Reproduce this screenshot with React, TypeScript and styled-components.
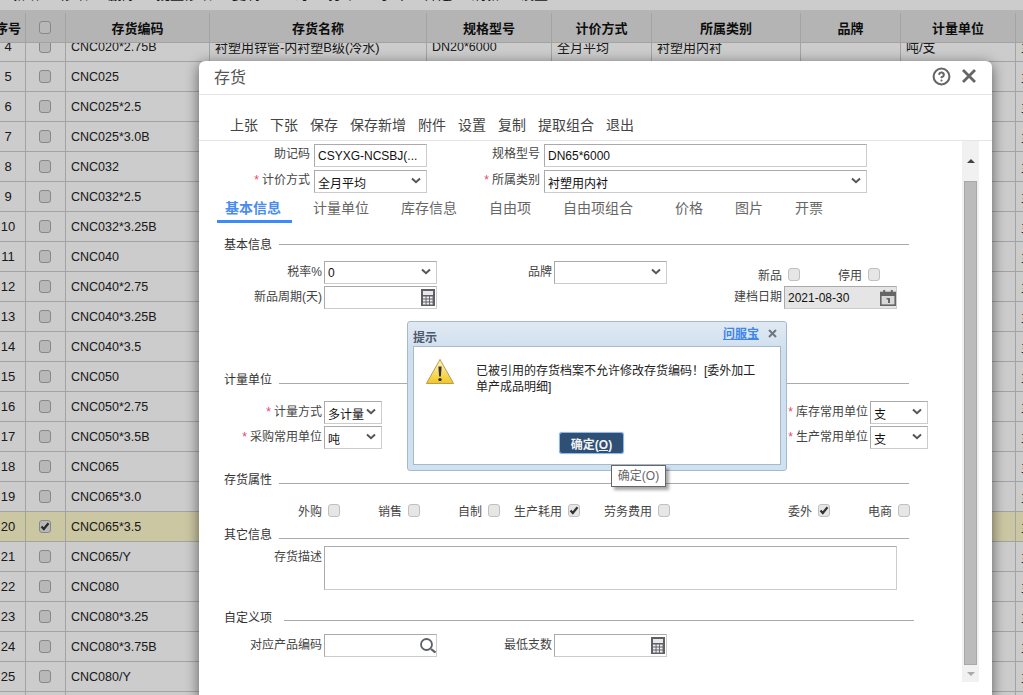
import React from "react";
import styled, { createGlobalStyle } from "styled-components";
import { CircleHelp } from "lucide-react";

const GlobalStyle = createGlobalStyle`
  html, body {
    margin: 0;
    height: 100%;
    overflow: hidden;
    background: #fff;
    font-family: "Liberation Sans", "Noto Sans CJK SC", sans-serif;
    font-size: 12px;
    color: #222;
  }
  * {
    box-sizing: border-box;
  }
`;

const Page = styled.div`
  position: relative;
  width: 1023px;
  height: 695px;
  overflow: hidden;
`;

const TopBar = styled.div`
  height: 10px;
  overflow: hidden;
  display: flex;
  gap: 20px;
  padding-left: 12px;
  span {
    margin-top: -13px;
    font-size: 14px;
    line-height: 14px;
    white-space: nowrap;
  }
`;

const TopRule = styled.div`
  height: 3px;
  background: #e2e2e2;
`;

const Table = styled.div`
  margin-left: -9px;
  width: 1140px;
`;

const HeadRow = styled.div`
  position: relative;
  z-index: 1;
  display: flex;
  height: 30px;
  background: #e2e2e2;
  border-bottom: 1px solid #ccc;
`;

const HeadCell = styled.div<{ $w: number; $check?: boolean }>`
  flex: none;
  width: ${(p) => p.$w}px;
  display: flex;
  align-items: center;
  justify-content: center;
  padding-right: ${(p) => (p.$check ? "1px" : "0")};
  border-right: 1px solid #ccc;
  font-size: 13px;
  font-weight: bold;
  color: #111;
`;

const Rows = styled.div`
  height: 652px;
  overflow: hidden;
`;

const Row = styled.div<{ $active?: boolean; $first?: boolean }>`
  display: flex;
  height: 30px;
  margin-top: ${(p) => (p.$first ? "-11px" : "0")};
  background: ${(p) => (p.$active ? "#fff9cc" : "#fff")};
  border-bottom: 1px solid #ccc;
`;

const Cell = styled.div<{ $w: number; $center?: boolean; $small?: boolean }>`
  flex: none;
  width: ${(p) => p.$w}px;
  display: flex;
  align-items: center;
  justify-content: ${(p) => (p.$center ? "center" : "flex-start")};
  padding-left: ${(p) => (p.$center ? "0" : "5px")};
  border-right: 1px solid #ccc;
  font-size: ${(p) => (p.$small ? "12.5px" : "13px")};
  white-space: nowrap;
  overflow: hidden;
`;

const CheckCell = styled(Cell)`
  padding-right: 1px;
`;

const Overlay = styled.div`
  position: absolute;
  inset: 0;
  z-index: 2;
  background: rgba(0, 0, 0, 0.2);
`;

const Dialog = styled.div`
  position: absolute;
  left: 199px;
  top: 61px;
  width: 793px;
  height: 640px;
  background: #fff;
  border-radius: 6px;
  box-shadow: 0 3px 14px rgba(0, 0, 0, 0.55);
`;

const DialogHead = styled.div`
  display: flex;
  align-items: center;
  justify-content: space-between;
  height: 34px;
  padding: 0 15px 3px;
  border-bottom: 1px solid #e5e5e5;
`;

const DialogTitle = styled.div`
  font-size: 16px;
  color: #555;
`;

const HeadIcons = styled.div`
  display: flex;
  align-items: center;
  gap: 10px;
  color: #666;
`;

const Toolbar = styled.div`
  display: flex;
  gap: 12px;
  height: 46px;
  padding: 20px 0 0 31px;
  border-bottom: 1px solid #e5e5e5;
  font-size: 14px;
  line-height: 20px;
  color: #444;
`;

const Body = styled.div`
  display: flex;
`;

const Form = styled.div`
  flex: none;
  width: 763px;
  padding: 3px 0 0 15px;
`;

const FieldRow = styled.div<{ $top?: number }>`
  display: flex;
  align-items: flex-start;
  min-height: 23px;
  margin-top: ${(p) => p.$top ?? 0}px;
`;

const Label = styled.div<{ $w: number }>`
  flex: none;
  width: ${(p) => p.$w}px;
  height: 23px;
  padding-right: 2px;
  text-align: right;
  line-height: 23px;
  color: #444;
  white-space: nowrap;
`;

const HeadLabel = styled(Label)`
  padding-right: 4px;
  line-height: 20px;
`;

const Star = styled.span`
  margin-right: 3px;
  color: #f0406a;
`;

const Input = styled.div<{ $w: number; $disabled?: boolean }>`
  position: relative;
  flex: none;
  display: flex;
  align-items: center;
  justify-content: space-between;
  width: ${(p) => p.$w}px;
  height: 23px;
  padding: 0 1px 0 3px;
  border: 1px solid #ccc;
  border-top-color: #aaa;
  border-left-color: #aaa;
  background: ${(p) => (p.$disabled ? "#e5e5e5" : "#fff")};
  color: #111;
  white-space: nowrap;
`;

const SelectBox = styled(Input)`
  padding: 1px 5px 0 3px;
`;

const TextArea = styled(Input)`
  height: 44px;
`;

const EdgeIcon = styled.svg`
  margin-right: -1px;
`;

const Chevron = () => (
  <svg width="10" height="7" viewBox="0 0 10 7" style={{ marginTop: -3 }}>
    <path d="M1 1.5 5 5.2 9 1.5" fill="none" stroke="#555" strokeWidth="2" />
  </svg>
);

const CalcIcon = () => (
  <svg width="14" height="17" viewBox="0 0 14 17">
    <rect width="14" height="17" fill="#5f5f66" />
    <rect x="2" y="2" width="10" height="4" fill="#e8e8e8" />
    {[2, 5.5, 9].map((x) =>
      [8, 11, 14].map((y) => (
        <rect key={`${x}-${y}`} x={x} y={y - 0.5} width="2.6" height="2" fill="#eee" />
      ))
    )}
  </svg>
);

const CalendarIcon = () => (
  <EdgeIcon width="16" height="16" viewBox="0 0 16 16">
    <rect x="0.8" y="2.5" width="14.4" height="12.7" fill="#d8d8d8" stroke="#666" strokeWidth="1.6" />
    <rect x="0.8" y="2.5" width="14.4" height="3.5" fill="#666" />
    <rect x="3.2" y="0" width="2" height="4" fill="#666" />
    <rect x="10.8" y="0" width="2" height="4" fill="#666" />
    <rect x="8" y="8" width="2" height="5" fill="#666" />
    <rect x="6.5" y="8" width="2" height="1.5" fill="#666" />
  </EdgeIcon>
);

const SearchIcon = () => (
  <EdgeIcon width="16" height="15" viewBox="0 0 16 15">
    <circle cx="6.5" cy="6.5" r="5.5" fill="none" stroke="#5c6068" strokeWidth="1.8" />
    <path d="M11 11 15.5 14.6" stroke="#5c6068" strokeWidth="2.2" />
  </EdgeIcon>
);

const Tabs = styled.div`
  display: flex;
  height: 27px;
  margin: 3px 0 0 3px;
`;

const Tab = styled.div<{ $w: number }>`
  flex: none;
  width: ${(p) => p.$w}px;
`;

const TabLabel = styled.div<{ $active?: boolean }>`
  width: ${(p) => (p.$active ? "75px" : "auto")};
  height: 27px;
  padding-left: 8px;
  border-bottom: 3px solid ${(p) => (p.$active ? "#3b8bff" : "transparent")};
  font-size: 14px;
  line-height: 24px;
  font-weight: ${(p) => (p.$active ? "bold" : "normal")};
  color: ${(p) => (p.$active ? "#4a8cf0" : "#666")};
`;

const Section = styled.div<{ $top: number; $gap?: number; $w?: number }>`
  display: flex;
  height: 16px;
  width: ${(p) => p.$w ?? 695}px;
  margin-top: ${(p) => p.$top}px;
  padding-left: 10px;
  gap: ${(p) => p.$gap ?? 7}px;
  line-height: 18px;
  color: #333;
`;

const SectionLine = styled.div<{ $y: number }>`
  flex: 1;
  height: 1px;
  margin-top: ${(p) => p.$y}px;
  background: #aaa;
`;

const CheckField = styled.div<{ $w: number; $drop?: boolean }>`
  flex: none;
  display: flex;
  align-items: center;
  justify-content: flex-end;
  gap: 6px;
  width: ${(p) => p.$w}px;
  height: 23px;
  padding-top: ${(p) => (p.$drop ? "4px" : "0")};
  color: #444;
`;

const Box = styled.span<{ $muted?: boolean }>`
  flex: none;
  display: flex;
  align-items: center;
  justify-content: center;
  width: 12px;
  height: 13px;
  border: 1px solid ${(p) => (p.$muted ? "#aaa" : "#c0c0c0")};
  border-radius: 3px;
  background: #e6e6e6;
`;

const Check = ({ on, muted }: { on?: boolean; muted?: boolean }) => (
  <Box $muted={muted}>
    {on && (
      <svg width="10" height="9" viewBox="0 0 10 9">
        <path d="M1.5 4.6 3.8 7 8.5 1.2" fill="none" stroke="#333" strokeWidth="2.2" />
      </svg>
    )}
  </Box>
);

const ScrollBar = styled.div`
  flex: none;
  display: flex;
  flex-direction: column;
  align-items: center;
  width: 17px;
  height: 541px;
  background: #f1f1f1;
`;

const ArrowZone = styled.div<{ $h: number }>`
  flex: none;
  display: flex;
  align-items: center;
  justify-content: center;
  height: ${(p) => p.$h}px;
`;

const Arrow = styled.span<{ $down?: boolean }>`
  width: 0;
  height: 0;
  border-left: 4px solid transparent;
  border-right: 4px solid transparent;
  border-bottom: ${(p) => (p.$down ? "0" : "4px solid #444")};
  border-top: ${(p) => (p.$down ? "4px solid #aaa" : "0")};
`;

const Thumb = styled.div`
  flex: 1;
  width: 13px;
  background: #bbb;
  border: 1px solid #a8a8a8;
`;

const Alert = styled.div`
  position: absolute;
  left: 407px;
  top: 321px;
  width: 380px;
  height: 150px;
  padding: 0 5px 5px;
  display: flex;
  flex-direction: column;
  border: 1px solid #a6b8cc;
  border-radius: 3px;
  background: linear-gradient(#e0e9f3, #cfdfee 20%, #cfe2f2);
`;

const AlertHead = styled.div`
  flex: none;
  display: flex;
  align-items: center;
  height: 24px;
  padding: 5px 4px 0 0;
`;

const AlertTitle = styled.div`
  flex: 1;
  font-weight: bold;
  color: #4c5a6c;
`;

const HelpLink = styled.a`
  margin: -9px 9px 0 0;
  font-size: 12px;
  font-weight: bold;
  color: #3f86ea;
  text-decoration: underline;
`;

const AlertClose = styled.svg`
  margin-top: -6px;
`;

const AlertInner = styled.div`
  flex: 1;
  display: flex;
  flex-direction: column;
  border: 1px solid #a7b8cb;
  background: #fff;
`;

const AlertBody = styled.div`
  flex: 1;
  display: flex;
  gap: 21px;
  padding: 11px 0 0 11px;
`;

const Message = styled.div`
  width: 288px;
  padding-top: 5px;
  line-height: 16px;
  color: #222;
`;

const AlertFoot = styled.div`
  display: flex;
  justify-content: center;
  padding: 0 11px 10px 0;
`;

const OkButton = styled.button`
  width: 65px;
  height: 22px;
  padding: 0;
  border: 1px solid #8db8f0;
  border-radius: 3px;
  box-shadow: 0 0 1px #8db8f0;
  background: #2f4f75;
  color: #f2f2f2;
  font: bold 12px "Liberation Sans", "Noto Sans CJK SC", sans-serif;
  u {
    text-underline-offset: 1px;
  }
`;

const Tooltip = styled.div`
  position: absolute;
  left: 611px;
  top: 465px;
  width: 55px;
  height: 22px;
  border: 1px solid #666;
  background: #fff;
  box-shadow: 3px 3px 3px rgba(0, 0, 0, 0.35);
  color: #666;
  line-height: 20px;
  text-align: center;
`;

const WarningIcon = () => (
  <svg width="30" height="30" viewBox="0 0 30 30">
    <defs>
      <linearGradient id="warn" x1="0" y1="0" x2="0" y2="1">
        <stop offset="0" stopColor="#fff6c0" />
        <stop offset="1" stopColor="#f2c61e" />
      </linearGradient>
    </defs>
    <path d="M15 1.5 28.6 25.5H1.4Z" fill="url(#warn)" stroke="#b89a5a" strokeWidth="1" strokeLinejoin="round" />
    <path d="M13.4 8.5h3.2l-.7 10h-1.8Z" fill="#333" />
    <circle cx="15" cy="21.6" r="1.7" fill="#333" />
  </svg>
);

const widths = [35, 40, 144, 217, 125, 100, 149, 100, 115, 115];
const heads = ["序号", "", "存货编码", "存货名称", "规格型号", "计价方式", "所属类别", "品牌", "计量单位", ""];
const codes = [
  "CNC020*2.75B", "CNC025", "CNC025*2.5", "CNC025*3.0B", "CNC032", "CNC032*2.5", "CNC032*3.25B",
  "CNC040", "CNC040*2.75", "CNC040*3.25B", "CNC040*3.5", "CNC050", "CNC050*2.75", "CNC050*3.5B",
  "CNC065", "CNC065*3.0", "CNC065*3.5", "CNC065/Y", "CNC080", "CNC080*3.25", "CNC080*3.75B", "CNC080/Y", "CNC100",
];
const topItems = ["新增", "修改", "删除", "批量修改", "复制", "查询", "打印", "导出", "筛选", "刷新", "设置"];
const tools = ["上张", "下张", "保存", "保存新增", "附件", "设置", "复制", "提取组合", "退出"];
const tabs = [
  { name: "基本信息", w: 88 },
  { name: "计量单位", w: 88 },
  { name: "库存信息", w: 88 },
  { name: "自由项", w: 74 },
  { name: "自由项组合", w: 112 },
  { name: "价格", w: 60 },
  { name: "图片", w: 60 },
  { name: "开票", w: 60 },
];
const attrs = [
  { name: "外购", w: 126 },
  { name: "销售", w: 80 },
  { name: "自制", w: 80 },
  { name: "生产耗用", w: 80, on: true },
  { name: "劳务费用", w: 90 },
  { name: "委外", w: 160, on: true },
  { name: "电商", w: 80 },
];

export default function App() {
  return (
    <Page>
      <GlobalStyle />
      <TopBar>
        {topItems.map((t) => (
          <span key={t}>{t}</span>
        ))}
      </TopBar>
      <TopRule />
      <Table>
        <HeadRow>
          {heads.map((h, i) => (
            <HeadCell key={i} $w={widths[i]} $check={i === 1}>
              {i === 1 ? <Check muted /> : h}
            </HeadCell>
          ))}
        </HeadRow>
        <Rows>
          {codes.map((code, i) => (
            <Row key={code} $first={i === 0} $active={i === 16}>
              <Cell $w={widths[0]} $center>
                {i + 4}
              </Cell>
              <CheckCell $w={widths[1]} $center>
                <Check muted on={i === 16} />
              </CheckCell>
              <Cell $w={widths[2]} $small>
                {code}
              </Cell>
              <Cell $w={widths[3]}>{i === 0 && "衬塑用锌管-内衬塑B级(冷水)"}</Cell>
              <Cell $w={widths[4]} $small>
                {i === 0 && "DN20*6000"}
              </Cell>
              <Cell $w={widths[5]}>{i === 0 && "全月平均"}</Cell>
              <Cell $w={widths[6]}>{i === 0 && "衬塑用内衬"}</Cell>
              <Cell $w={widths[7]} />
              <Cell $w={widths[8]}>{i === 0 && "吨/支"}</Cell>
              <Cell $w={widths[9]}>主计量</Cell>
            </Row>
          ))}
        </Rows>
      </Table>
      <Overlay>
        <Dialog>
          <DialogHead>
            <DialogTitle>存货</DialogTitle>
            <HeadIcons>
              <CircleHelp size={19} strokeWidth={2.6} />
              <svg width="16" height="16" viewBox="0 0 16 16">
                <path d="M2 2 14 14M14 2 2 14" stroke="#666" strokeWidth="2.8" />
              </svg>
            </HeadIcons>
          </DialogHead>
          <Toolbar>
            {tools.map((t) => (
              <span key={t}>{t}</span>
            ))}
          </Toolbar>
          <Body>
            <Form>
              <FieldRow>
                <HeadLabel $w={100}>助记码</HeadLabel>
                <Input $w={113}>CSYXG-NCSBJ(...</Input>
                <HeadLabel $w={117}>规格型号</HeadLabel>
                <Input $w={323}>DN65*6000</Input>
              </FieldRow>
              <FieldRow $top={3}>
                <HeadLabel $w={100}>
                  <Star>*</Star>计价方式
                </HeadLabel>
                <SelectBox $w={113}>
                  全月平均
                  <Chevron />
                </SelectBox>
                <HeadLabel $w={117}>
                  <Star>*</Star>所属类别
                </HeadLabel>
                <SelectBox $w={323}>
                  衬塑用内衬
                  <Chevron />
                </SelectBox>
              </FieldRow>
              <Tabs>
                {tabs.map((t, i) => (
                  <Tab key={t.name} $w={t.w}>
                    <TabLabel $active={i === 0}>{t.name}</TabLabel>
                  </Tab>
                ))}
              </Tabs>

              <Section $top={13}>
                基本信息
                <SectionLine $y={8} />
              </Section>
              <FieldRow $top={9}>
                <Label $w={110}>税率%</Label>
                <SelectBox $w={113}>
                  0
                  <Chevron />
                </SelectBox>
                <Label $w={117}>品牌</Label>
                <SelectBox $w={113}>
                  <span />
                  <Chevron />
                </SelectBox>
                <CheckField $w={133} $drop>
                  新品
                  <Check />
                </CheckField>
                <CheckField $w={80} $drop>
                  停用
                  <Check />
                </CheckField>
              </FieldRow>
              <FieldRow $top={2}>
                <Label $w={110}>新品周期(天)</Label>
                <Input $w={113}>
                  <span />
                  <CalcIcon />
                </Input>
                <Label $w={347}>建档日期</Label>
                <Input $w={113} $disabled>
                  2021-08-30
                  <CalendarIcon />
                </Input>
              </FieldRow>

              <Section $top={62}>
                计量单位
                <SectionLine $y={12} />
              </Section>
              <FieldRow $top={14}>
                <Label $w={110}>
                  <Star>*</Star>计量方式
                </Label>
                <SelectBox $w={58}>
                  多计量
                  <Chevron />
                </SelectBox>
                <Label $w={488}>
                  <Star>*</Star>库存常用单位
                </Label>
                <SelectBox $w={58}>
                  支
                  <Chevron />
                </SelectBox>
              </FieldRow>
              <FieldRow $top={2}>
                <Label $w={110}>
                  <Star>*</Star>采购常用单位
                </Label>
                <SelectBox $w={58}>
                  吨
                  <Chevron />
                </SelectBox>
                <Label $w={488}>
                  <Star>*</Star>生产常用单位
                </Label>
                <SelectBox $w={58}>
                  支
                  <Chevron />
                </SelectBox>
              </FieldRow>

              <Section $top={22}>
                存货属性
                <SectionLine $y={12} />
              </Section>
              <FieldRow $top={12}>
                {attrs.map((a) => (
                  <CheckField key={a.name} $w={a.w}>
                    {a.name}
                    <Check on={a.on} />
                  </CheckField>
                ))}
              </FieldRow>

              <Section $top={4}>
                其它信息
                <SectionLine $y={12} />
              </Section>
              <FieldRow $top={4}>
                <Label $w={110}>存货描述</Label>
                <TextArea $w={573} />
              </FieldRow>

              <Section $top={19} $gap={12} $w={700}>
                自定义项
                <SectionLine $y={11} />
              </Section>
              <FieldRow $top={9}>
                <Label $w={110}>对应产品编码</Label>
                <Input $w={113}>
                  <span />
                  <SearchIcon />
                </Input>
                <Label $w={117}>最低支数</Label>
                <Input $w={113}>
                  <span />
                  <CalcIcon />
                </Input>
              </FieldRow>
            </Form>
            <ScrollBar>
              <ArrowZone $h={40}>
                <Arrow />
              </ArrowZone>
              <Thumb />
              <ArrowZone $h={17}>
                <Arrow $down />
              </ArrowZone>
            </ScrollBar>
          </Body>
        </Dialog>

        <Alert>
          <AlertHead>
            <AlertTitle>提示</AlertTitle>
            <HelpLink>问服宝</HelpLink>
            <AlertClose width="9" height="9" viewBox="0 0 9 9">
              <path d="M1 1 8 8M8 1 1 8" stroke="#6f7680" strokeWidth="2" />
            </AlertClose>
          </AlertHead>
          <AlertInner>
            <AlertBody>
              <WarningIcon />
              <Message>已被引用的存货档案不允许修改存货编码！[委外加工单产成品明细]</Message>
            </AlertBody>
            <AlertFoot>
              <OkButton>
                确定(<u>O</u>)
              </OkButton>
            </AlertFoot>
          </AlertInner>
        </Alert>
        <Tooltip>确定(O)</Tooltip>
      </Overlay>
    </Page>
  );
}
